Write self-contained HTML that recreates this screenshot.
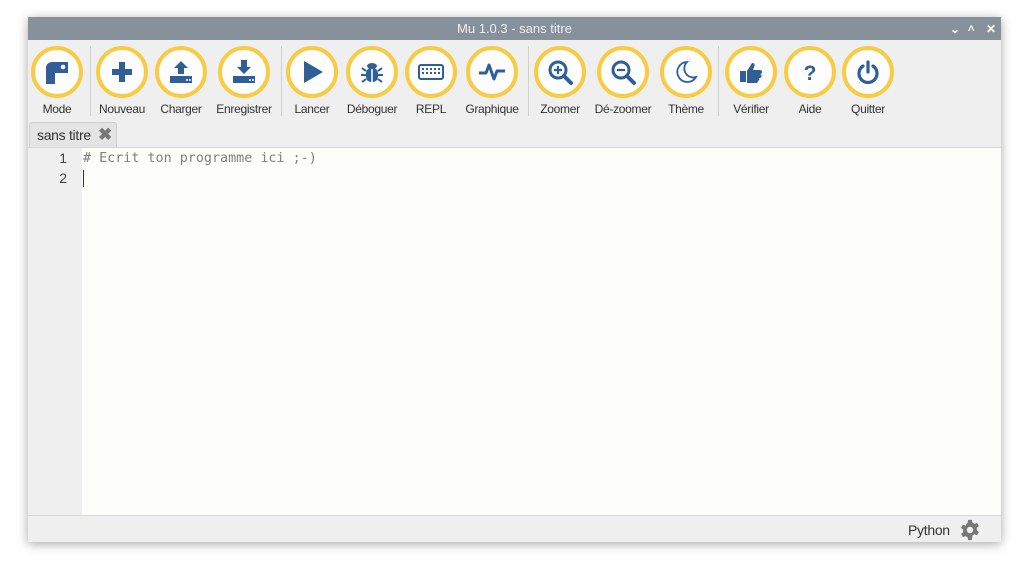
<!DOCTYPE html>
<html><head><meta charset="utf-8"><style>
*{margin:0;padding:0;box-sizing:border-box}
body{width:1024px;height:562px;background:#fff;position:relative;overflow:hidden;font-family:"Liberation Sans",sans-serif}
.win{position:absolute;left:28px;top:17px;width:973px;height:525px;background:#efefef;box-shadow:0 2px 10px rgba(0,0,0,.35)}
.title{position:absolute;left:0;top:0;width:973px;height:23px;background:#87919b;color:#eef0f2;font-size:13px;text-align:center;line-height:24px}
.wc{position:absolute;top:0;color:#fff;font-size:12px;line-height:24px;font-weight:bold}
.btn{position:absolute;top:29px;width:52px;height:52px;border-radius:50%;border:4px solid #f8cb45;background:#fdfdfd;display:flex;align-items:center;justify-content:center}
.lab{position:absolute;top:85px;font-size:12px;color:#333;width:100px;text-align:center;letter-spacing:-0.3px}
.sep{position:absolute;top:29px;width:1px;height:70px;background:#d0d0d0}
.tab{position:absolute;left:1px;top:105px;width:88px;height:26px;background:#e4e4e4;border:1px solid #cfcfcf;border-bottom:none;border-radius:3px 3px 0 0;font-size:14px;color:#333;line-height:24px;padding-left:7px;letter-spacing:-0.3px}
.editor{position:absolute;left:0;top:130px;width:973px;height:368px;background:#fdfdf9;border-top:1px solid #d8d8d8}
.gutter{position:absolute;left:0;top:0;width:54px;height:368px;background:#efefef;font-family:"Liberation Sans",sans-serif;font-size:14px;color:#444}
.code{position:absolute;left:55px;top:1px;font-family:"DejaVu Sans Mono","Liberation Mono",monospace;font-size:13.4px;color:#808080;line-height:20px}
.status{position:absolute;left:0;top:498px;width:973px;height:27px;background:#efefef;border-top:1px solid #d8d8d8}
svg{display:block}
</style></head><body>
<div class="win">
<div class="title">Mu 1.0.3 - sans titre</div>
<div class="wc" style="left:922px">&#8964;</div>
<div class="wc" style="left:940px;font-size:11px">&#708;</div>
<div class="wc" style="left:958px">&#10005;</div>

<div class="btn" style="left:3px"><svg width="28" height="28" viewBox="0 0 28 28"><path d="M3 26V10a6 6 0 0 1 6-6h16v11H12v11z" fill="#2f5f96"/><circle cx="20" cy="9" r="2.3" fill="#fff"/></svg></div>
<div class="lab" style="left:-21px">Mode</div>
<div class="sep" style="left:62px"></div>

<div class="btn" style="left:68px"><svg width="26" height="26" viewBox="0 0 26 26"><path d="M10 3h6v7h7v6h-7v7h-6v-7H3v-6h7z" fill="#2f5f96"/></svg></div>
<div class="lab" style="left:44px">Nouveau</div>

<div class="btn" style="left:127px"><svg width="28" height="28" viewBox="0 0 28 28"><path d="M14 3l7 7h-4v6h-6v-6H7z" fill="#2f5f96"/><path d="M3 18h22v7H3z" fill="#2f5f96"/><circle cx="20" cy="22" r="1" fill="#fff"/><circle cx="23" cy="22" r="1" fill="#fff"/></svg></div>
<div class="lab" style="left:103px">Charger</div>

<div class="btn" style="left:190px"><svg width="28" height="28" viewBox="0 0 28 28"><path d="M11 2h6v7h4l-7 7-7-7h4z" fill="#2f5f96"/><path d="M3 18h22v7H3z" fill="#2f5f96"/><circle cx="20" cy="22" r="1" fill="#fff"/><circle cx="23" cy="22" r="1" fill="#fff"/></svg></div>
<div class="lab" style="left:166px">Enregistrer</div>
<div class="sep" style="left:253px"></div>

<div class="btn" style="left:258px"><svg width="28" height="28" viewBox="0 0 28 28"><path d="M6 3l19 11L6 25z" fill="#2f5f96"/></svg></div>
<div class="lab" style="left:234px">Lancer</div>

<div class="btn" style="left:318px"><svg width="28" height="28" viewBox="0 0 28 28"><g fill="#2f5f96"><ellipse cx="14" cy="8" rx="5" ry="3"/><rect x="8" y="10" width="12" height="14" rx="5"/></g><g stroke="#2f5f96" stroke-width="2"><path d="M8 13l-4-3M20 13l4-3M8 17H3M20 17h5M8 21l-4 3M20 21l4 3"/><path d="M14 11v13" stroke="#fff" stroke-width="1.5"/></g></svg></div>
<div class="lab" style="left:294px">Déboguer</div>

<div class="btn" style="left:377px"><svg width="28" height="28" viewBox="0 0 28 28"><rect x="2" y="7" width="24" height="14" rx="2" fill="none" stroke="#2f5f96" stroke-width="2"/><g fill="#2f5f96"><rect x="5" y="10" width="2" height="2"/><rect x="9" y="10" width="2" height="2"/><rect x="13" y="10" width="2" height="2"/><rect x="17" y="10" width="2" height="2"/><rect x="21" y="10" width="2" height="2"/><rect x="5" y="14" width="2" height="2"/><rect x="9" y="14" width="2" height="2"/><rect x="13" y="14" width="2" height="2"/><rect x="17" y="14" width="2" height="2"/><rect x="21" y="14" width="2" height="2"/></g></svg></div>
<div class="lab" style="left:353px">REPL</div>

<div class="btn" style="left:438px"><svg width="30" height="28" viewBox="0 0 30 28"><path d="M2 15h7l3-8 5 14 3-8h8" fill="none" stroke="#2f5f96" stroke-width="3" stroke-linejoin="round"/></svg></div>
<div class="lab" style="left:414px">Graphique</div>
<div class="sep" style="left:500px"></div>

<div class="btn" style="left:506px"><svg width="28" height="28" viewBox="0 0 28 28"><circle cx="12" cy="12" r="8" fill="none" stroke="#2f5f96" stroke-width="3"/><path d="M18 18l7 7" stroke="#2f5f96" stroke-width="4" stroke-linecap="round"/><path d="M12 8v8M8 12h8" stroke="#2f5f96" stroke-width="2.2"/></svg></div>
<div class="lab" style="left:482px">Zoomer</div>

<div class="btn" style="left:569px"><svg width="28" height="28" viewBox="0 0 28 28"><circle cx="12" cy="12" r="8" fill="none" stroke="#2f5f96" stroke-width="3"/><path d="M18 18l7 7" stroke="#2f5f96" stroke-width="4" stroke-linecap="round"/><path d="M8 12h8" stroke="#2f5f96" stroke-width="2.2"/></svg></div>
<div class="lab" style="left:545px">Dé-zoomer</div>

<div class="btn" style="left:632px"><svg width="28" height="28" viewBox="0 0 28 28"><path d="M15 4a10 10 0 1 0 9 15A9 9 0 0 1 15 4z" fill="none" stroke="#2f5f96" stroke-width="1.8"/></svg></div>
<div class="lab" style="left:608px">Thème</div>
<div class="sep" style="left:690px"></div>

<div class="btn" style="left:697px"><svg width="28" height="28" viewBox="0 0 28 28"><g fill="#2f5f96"><rect x="3" y="13" width="6" height="11"/><path d="M10 13l5-8c2 0 3 1 2.5 3L16 12h7a2 2 0 0 1 0 4 2 2 0 0 1-1 4 2 2 0 0 1-1 3 2 2 0 0 1-1 2H10z"/></g></svg></div>
<div class="lab" style="left:673px">Vérifier</div>

<div class="btn" style="left:756px"><svg width="28" height="28" viewBox="0 0 28 28"><text x="14" y="22" font-family="Liberation Sans" font-weight="bold" font-size="21" fill="#2f5f96" text-anchor="middle">?</text></svg></div>
<div class="lab" style="left:732px">Aide</div>

<div class="btn" style="left:814px"><svg width="28" height="28" viewBox="0 0 28 28"><path d="M9 8a9 9 0 1 0 10 0" fill="none" stroke="#2f5f96" stroke-width="3.2" stroke-linecap="round"/><path d="M14 4v10" stroke="#2f5f96" stroke-width="3.2" stroke-linecap="round"/></svg></div>
<div class="lab" style="left:790px">Quitter</div>

<div class="tab">sans titre <span style="position:absolute;left:68px;top:0;color:#777;font-weight:bold;font-size:17px">&#10006;</span></div>

<div class="editor">
<div class="gutter"><div style="position:absolute;right:15px;top:0px;line-height:20px;text-align:right">1<br>2</div></div>
<div class="code"># Ecrit ton programme ici ;-)</div>
<div style="position:absolute;left:55px;top:22px;width:1px;height:17px;background:#333"></div>
</div>

<div class="status">
<div style="position:absolute;left:880px;top:6px;font-size:14px;color:#333;letter-spacing:-0.3px">Python</div>
<svg style="position:absolute;left:931px;top:3px" width="22" height="22" viewBox="0 0 24 24"><path fill="#777" d="M10 1h4l.6 3a8 8 0 0 1 2.2 1.3l2.9-1 2 3.4-2.3 2a8 8 0 0 1 0 2.6l2.3 2-2 3.4-2.9-1a8 8 0 0 1-2.2 1.3L14 23h-4l-.6-3a8 8 0 0 1-2.2-1.3l-2.9 1-2-3.4 2.3-2a8 8 0 0 1 0-2.6l-2.3-2 2-3.4 2.9 1A8 8 0 0 1 9.4 4z"/><circle cx="12" cy="12" r="3.5" fill="#efefef"/></svg>
</div>
</div>
</body></html>
